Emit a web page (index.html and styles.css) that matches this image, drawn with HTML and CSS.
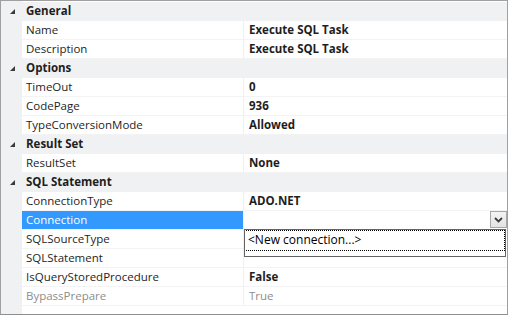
FILE: index.html
```html
<!DOCTYPE html>
<html lang="en">
<head>
    <meta charset="UTF-8">
    <title>Properties</title>
    <link rel="stylesheet" href="styles.css">
</head>
<body>
<div class="grid">
    <div class="row cat"><span class="arrow"></span><div class="cat-name">General</div></div>
    <div class="row"><span class="gutter"></span><div class="name">Name</div><div class="value">Execute SQL Task</div></div>
    <div class="row"><span class="gutter"></span><div class="name">Description</div><div class="value">Execute SQL Task</div></div>

    <div class="row cat"><span class="arrow"></span><div class="cat-name">Options</div></div>
    <div class="row"><span class="gutter"></span><div class="name">TimeOut</div><div class="value">0</div></div>
    <div class="row"><span class="gutter"></span><div class="name">CodePage</div><div class="value">936</div></div>
    <div class="row"><span class="gutter"></span><div class="name">TypeConversionMode</div><div class="value">Allowed</div></div>

    <div class="row cat"><span class="arrow"></span><div class="cat-name">Result Set</div></div>
    <div class="row"><span class="gutter"></span><div class="name">ResultSet</div><div class="value">None</div></div>

    <div class="row cat"><span class="arrow"></span><div class="cat-name">SQL Statement</div></div>
    <div class="row"><span class="gutter"></span><div class="name">ConnectionType</div><div class="value">ADO.NET</div></div>
    <div class="row selected">
        <span class="gutter"></span>
        <div class="name">Connection</div>
        <div class="value combo">
            <button class="drop-btn">
                <svg width="9" height="6" viewBox="0 0 9 6"><path d="M1 1 L4.5 4.5 L8 1" fill="none" stroke="#3c3c3c" stroke-width="1.8"/></svg>
            </button>
            <div class="drop-list">
                <div class="drop-item">&lt;New connection...&gt;</div>
            </div>
        </div>
    </div>
    <div class="row"><span class="gutter"></span><div class="name">SQLSourceType</div><div class="value"></div></div>
    <div class="row"><span class="gutter"></span><div class="name">SQLStatement</div><div class="value"></div></div>
    <div class="row"><span class="gutter"></span><div class="name">IsQueryStoredProcedure</div><div class="value">False</div></div>
    <div class="row disabled"><span class="gutter"></span><div class="name">BypassPrepare</div><div class="value">True</div></div>
</div>
</body>
</html>
```

FILE: styles.css
```css
body {
    margin: 0;
    background: #ffffff;
    font-family: "Open Sans", "Noto Sans", sans-serif;
    font-size: 11.5px;
    color: #1e1e1e;
}

.grid {
    width: 508px;
    height: 315px;
    box-sizing: border-box;
    border: 1px solid #a0a0a0;
    border-bottom-color: #8e8e8e;
    background: linear-gradient(to right, #f0f1f3 21px, #ffffff 21px);
    padding-top: 1px;
}

.row {
    display: flex;
    height: 19px;
    line-height: 18px;
}

.gutter,
.arrow {
    width: 21px;
    flex-shrink: 0;
}

.arrow {
    position: relative;
}

.arrow::after {
    content: "";
    position: absolute;
    left: 9px;
    top: 7px;
    border-left: 5px solid transparent;
    border-bottom: 5px solid #3a3a3a;
}

.cat {
    background: #f0f1f3;
}

.cat-name {
    padding-left: 4px;
    font-weight: bold;
}

.name {
    width: 221px;
    flex-shrink: 0;
    padding-left: 4px;
    box-sizing: border-box;
    border-bottom: 1px solid #f3f3f3;
    white-space: nowrap;
}

.value {
    flex: 1;
    padding-left: 5px;
    border-left: 1px solid #f0f0f0;
    border-bottom: 1px solid #f3f3f3;
    font-weight: bold;
    white-space: nowrap;
}

.selected .name {
    background: #3399ff;
    color: #ffffff;
}

.disabled .name,
.disabled .value {
    color: #8d8d8d;
    font-weight: normal;
}

.combo {
    position: relative;
}

.drop-btn {
    position: absolute;
    right: 0;
    top: 0;
    width: 17px;
    height: 17px;
    padding: 0;
    border: 1px solid #a7a7a7;
    background: linear-gradient(#f4f4f4, #e2e2e2);
    display: flex;
    align-items: center;
    justify-content: center;
}

.drop-list {
    position: absolute;
    left: 0;
    right: 1px;
    top: 18px;
    height: 28px;
    box-sizing: border-box;
    border: 1px solid #646464;
    background: #ffffff;
    z-index: 2;
}

.drop-item {
    margin: 0 0 0 1px;
    padding-left: 2px;
    height: 19px;
    line-height: 18px;
    border: 1px dotted #000000;
    border-left: none;
    font-size: 12px;
    font-weight: normal;
    color: #000000;
}
```
